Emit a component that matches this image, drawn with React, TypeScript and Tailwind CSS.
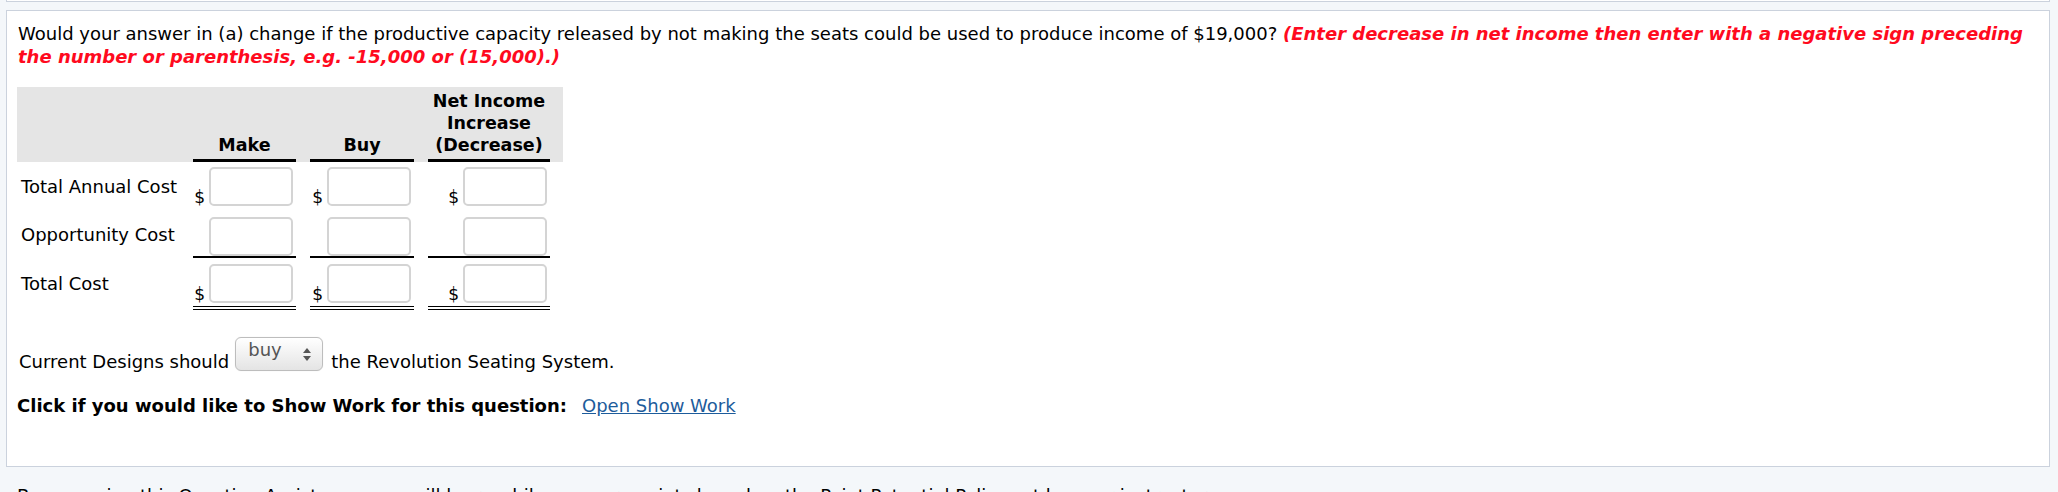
import React from 'react';

const cols = 'grid grid-cols-[169px_117px_118px_142px]';

const cellPad = ['px-[7px]', 'px-[7px]', 'pl-[7px] pr-[13px]'];

const MoneyInput = ({ dollar }: { dollar?: boolean }) => (
  <div className="flex items-end justify-end pr-[3px]">
    {dollar && <span className="mr-[4px] text-[17px] leading-none">$</span>}
    <input
      type="text"
      className="h-[39px] w-[84px] rounded-[5px] border-2 border-[#d4d4d4] bg-white outline-none"
    />
  </div>
);

const rows = [
  { label: 'Total Annual Cost', dollar: true, inner: 'pt-[5px] pb-[6px]' },
  { label: 'Opportunity Cost', dollar: false, inner: 'pt-[5px] border-b-2 border-black' },
  { label: 'Total Cost', dollar: true, inner: 'pt-[6px] pb-[3px] border-b-4 border-double border-black' },
];

const SelectBox = () => (
  <div className="relative mb-[2px] ml-[6px] mr-[8px] h-[34px] w-[88px] rounded-[6px] border border-[#bdbdbd] bg-gradient-to-b from-white to-[#e4e4e4] shadow-[inset_0_1px_1px_rgba(255,255,255,0.9),0_0_1px_rgba(0,0,0,0.15)]">
    <span className="absolute left-[12px] top-[1px] text-[18px] leading-[22px] text-[#555]">buy</span>
    <svg className="absolute right-[11px] top-[10px]" width="8" height="13" viewBox="0 0 8 13">
      <path d="M4 0 L8 5 L0 5 Z" fill="#555" />
      <path d="M0 8 L8 8 L4 13 Z" fill="#555" />
    </svg>
  </div>
);

export default function App() {
  return (
    <div className="h-[492px] w-[2058px] overflow-hidden bg-[#f4f7fa] font-['DejaVu_Sans',sans-serif] text-[18px] text-black">
      <div className="ml-[6px] mr-[8px] h-[2px] border-x border-b border-[#cbd2dd] bg-white" />

      <div className="ml-[6px] mr-[8px] mt-[8px] h-[457px] border border-[#cbd2dd] bg-white pl-[10px] pt-[11px]">
        <p className="pl-[1px] leading-[23px]">
          Would your answer in (a) change if the productive capacity released by not making the seats could be used to
          produce income of $19,000?{' '}
          <span className="font-bold italic text-[#ff0a1e]">
            (Enter decrease in net income then enter with a negative sign preceding
            <br />
            the number or parenthesis, e.g. -15,000 or (15,000).)
          </span>
        </p>

        {/* Table */}
        <div className="mt-[19px] w-[546px]">
          <div className={`${cols} bg-[#e5e5e5] text-[17.5px] font-bold leading-[22px]`}>
            <div />
            {['Make', 'Buy'].map((h, i) => (
              <div key={h} className={cellPad[i]}>
                <div className="flex h-full items-end justify-center border-b-[3px] border-black pb-[3px]">{h}</div>
              </div>
            ))}
            <div className={cellPad[2]}>
              <div className="flex flex-col items-center border-b-[3px] border-black pt-[3px] pb-[3px]">
                <span>Net Income</span>
                <span>Increase</span>
                <span>(Decrease)</span>
              </div>
            </div>
          </div>

          {rows.map((r) => (
            <div key={r.label} className={cols}>
              <div className="flex items-center pl-[4px] leading-[22px]">{r.label}</div>
              {cellPad.map((p, i) => (
                <div key={i} className={p}>
                  <div className={r.inner}>
                    <MoneyInput dollar={r.dollar} />
                  </div>
                </div>
              ))}
            </div>
          ))}
        </div>

        <div className="mt-[27px] flex items-end pl-[2px] leading-[22px]">
          <span>Current Designs should</span>
          <SelectBox />
          <span>the Revolution Seating System.</span>
        </div>

        <div className="mt-[22px] flex items-center leading-[22px]">
          <span className="font-bold">Click if you would like to Show Work for this question:</span>
          <a href="#" className="ml-[15px] text-[#1d5c9b] underline">
            Open Show Work
          </a>
        </div>
      </div>

      <p className="mt-[18px] pl-[17px] leading-[22px]">
        By accessing this Question Assistance, you will learn while you earn points based on the Point Potential Policy
        set by your instructor.
      </p>
    </div>
  );
}
